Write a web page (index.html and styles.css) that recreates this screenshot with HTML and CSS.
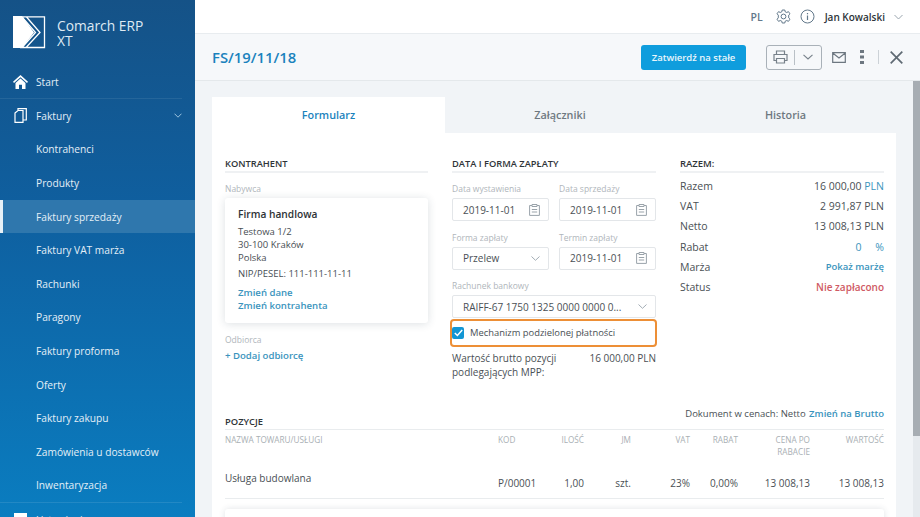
FILE: index.html
```html
<!DOCTYPE html>
<html lang="pl">
<head>
  <meta charset="UTF-8" />
  <title>Comarch ERP XT</title>
  <link rel="stylesheet" href="styles.css">
</head>
<body>
<div class="app">
  <aside class="sidebar">
    <div class="brand">
      <svg class="brand-logo" width="33" height="33" viewBox="0 0 33 33">
        <path d="M0 0H9L21 16.500L9 32H0Z" fill="#fff"/>
        <path d="M7 .8H31.500V31.500H7M9 .8L22.500 16.500L9 31.500M13.500 1L27 16.500L13.500 31" fill="none" stroke="#fff" stroke-width="1.300"/>
      </svg>
      <div class="brand-name">Comarch ERP<br>XT</div>
    </div>
    <nav class="nav">
      <a class="nav-item nav-top">
        <svg class="nav-icon" width="15" height="14" viewBox="0 0 15 14"><path d="M7.500 0L15 6.800L14 8L7.500 2.200L1 8L0 6.800ZM2.500 8L7.500 3.600L12.500 8V14H9V9.800H6V14H2.500Z" fill="#fff"/></svg>
        Start
      </a>
      <a class="nav-item nav-top nav-open">
        <svg class="nav-icon" width="13" height="15" viewBox="0 0 13 15"><path d="M4 2.500V.7H12.300V12H9M1 5L4 2.500H9V14.300H1Z" fill="none" stroke="#fff" stroke-width="1.200"/></svg>
        Faktury
        <svg class="nav-chevron" width="8" height="5" viewBox="0 0 8 5"><path d="M.5 .7L4 4.200L7.500 .7" fill="none" stroke="#9cc3de" stroke-width="1"/></svg>
      </a>
      <a class="nav-item nav-sub">Kontrahenci</a>
      <a class="nav-item nav-sub">Produkty</a>
      <a class="nav-item nav-sub nav-active">Faktury sprzedaży</a>
      <a class="nav-item nav-sub">Faktury VAT marża</a>
      <a class="nav-item nav-sub">Rachunki</a>
      <a class="nav-item nav-sub">Paragony</a>
      <a class="nav-item nav-sub">Faktury proforma</a>
      <a class="nav-item nav-sub">Oferty</a>
      <a class="nav-item nav-sub">Faktury zakupu</a>
      <a class="nav-item nav-sub">Zamówienia u dostawców</a>
      <a class="nav-item nav-sub">Inwentaryzacja</a>
      <a class="nav-item nav-top nav-divided">
        <svg class="nav-icon" width="13" height="14" viewBox="0 0 13 14"><rect width="13" height="14" fill="#fff"/></svg>
        Ustawienia
      </a>
    </nav>
  </aside>

  <main class="main">
    <header class="topbar">
      <span class="lang">PL</span>
      <svg width="15" height="15" viewBox="0 0 15 15"><path d="M6.200 1H8.800L9.200 2.800L10.800 3.500L12.400 2.600L14 4.800L12.700 6.100V8.900L14 10.200L12.400 12.400L10.800 11.500L9.200 12.200L8.800 14H6.200L5.800 12.200L4.200 11.500L2.600 12.400L1 10.200L2.300 8.900V6.100L1 4.800L2.600 2.600L4.200 3.500L5.800 2.800Z" fill="none" stroke="#62788a"/><circle cx="7.500" cy="7.500" r="2.400" fill="none" stroke="#62788a"/></svg>
      <svg class="info" width="15" height="15" viewBox="0 0 15 15"><circle cx="7.500" cy="7.500" r="6.500" fill="none" stroke="#62788a"/><path d="M7.500 6.500V11M7.500 4V5.200" stroke="#62788a" stroke-width="1.200"/></svg>
      <span class="user">Jan Kowalski</span>
      <svg width="9" height="6" viewBox="0 0 9 6"><path d="M.5 1L4.500 5L8.500 1" fill="none" stroke="#9aa5ae"/></svg>
    </header>

    <div class="titlebar">
      <h1 class="doc-number">FS/19/11/18</h1>
      <button class="btn-primary">Zatwierdź na stałe</button>
      <div class="split-btn">
        <span class="split-part">
          <svg width="15" height="14" viewBox="0 0 15 14"><path d="M3.500 4V1H11.500V4M3.500 10.500H1V4.500H14V10.500H11.500M3.500 8.500H11.500V13H3.500Z" fill="none" stroke="#77818a" stroke-width="1.200"/></svg>
        </span>
        <span class="split-part">
          <svg width="10" height="6" viewBox="0 0 10 6"><path d="M.5 .8L5 5L9.500 .8" fill="none" stroke="#77818a" stroke-width="1.100"/></svg>
        </span>
      </div>
      <svg class="mail" width="14" height="11" viewBox="0 0 14 11"><path d="M.7 .7H13.300V10.300H.7ZM.7 1L7 6L13.300 1" fill="none" stroke="#6d7780" stroke-width="1.200"/></svg>
      <svg class="dots" width="4" height="14" viewBox="0 0 4 14"><path d="M0 0H4V3H0ZM0 5.500H4V8.500H0ZM0 11H4V14H0Z" fill="#6d7780"/></svg>
      <span class="sep"></span>
      <svg class="close" width="13" height="13" viewBox="0 0 13 13"><path d="M.7 .7L12.300 12.300M12.300 .7L.7 12.300" stroke="#5f6a73" stroke-width="1.700"/></svg>
    </div>

    <div class="scroller">
      <div class="content">
        <div class="tabs">
          <a class="tab tab-active">Formularz</a>
          <a class="tab">Załączniki</a>
          <a class="tab">Historia</a>
        </div>

        <section class="panel">
          <div class="columns">
            <div class="col-client">
              <h2 class="section-title">KONTRAHENT</h2>
              <div class="field-label">Nabywca</div>
              <div class="client-card">
                <div class="client-name">Firma handlowa</div>
                <div class="client-address">Testowa 1/2<br>30-100 Kraków<br>Polska</div>
                <div class="client-nip">NIP/PESEL: 111-111-11-11</div>
                <a class="link">Zmień dane</a>
                <a class="link">Zmień kontrahenta</a>
              </div>
              <div class="field-label receiver-label">Odbiorca</div>
              <a class="link add-link">+ Dodaj odbiorcę</a>
            </div>

            <div class="col-payment">
              <h2 class="section-title">DATA I FORMA ZAPŁATY</h2>
              <div class="form-grid">
                <div>
                  <div class="field-label">Data wystawienia</div>
                  <div class="input">2019-11-01
                    <svg class="cal" width="11" height="12" viewBox="0 0 11 12"><path d="M3 1.500H.6V11.400H10.400V1.500H8M3 .5H8V2.500H3ZM2.800 5.500H8.200M2.800 8H8.200" fill="none" stroke="#9aa3aa"/></svg>
                  </div>
                </div>
                <div>
                  <div class="field-label">Data sprzedaży</div>
                  <div class="input">2019-11-01
                    <svg class="cal" width="11" height="12" viewBox="0 0 11 12"><path d="M3 1.500H.6V11.400H10.400V1.500H8M3 .5H8V2.500H3ZM2.800 5.500H8.200M2.800 8H8.200" fill="none" stroke="#9aa3aa"/></svg>
                  </div>
                </div>
                <div>
                  <div class="field-label">Forma zapłaty</div>
                  <div class="input">Przelew
                    <svg class="caret" width="9" height="5" viewBox="0 0 9 5"><path d="M.5 .5L4.500 4.300L8.500 .5" fill="none" stroke="#a3adb5"/></svg>
                  </div>
                </div>
                <div>
                  <div class="field-label">Termin zapłaty</div>
                  <div class="input">2019-11-01
                    <svg class="cal" width="11" height="12" viewBox="0 0 11 12"><path d="M3 1.500H.6V11.400H10.400V1.500H8M3 .5H8V2.500H3ZM2.800 5.500H8.200M2.800 8H8.200" fill="none" stroke="#9aa3aa"/></svg>
                  </div>
                </div>
                <div class="span-2">
                  <div class="field-label">Rachunek bankowy</div>
                  <div class="input">RAIFF-67 1750 1325 0000 0000 0...
                    <svg class="caret" width="9" height="5" viewBox="0 0 9 5"><path d="M.5 .5L4.500 4.300L8.500 .5" fill="none" stroke="#a3adb5"/></svg>
                  </div>
                </div>
              </div>
              <label class="mpp-check">
                <span class="checkbox"><svg width="9" height="8" viewBox="0 0 9 8"><path d="M.8 4L3.400 6.500L8.200 1" fill="none" stroke="#fff" stroke-width="1.500"/></svg></span>
                Mechanizm podzielonej płatności
              </label>
              <div class="mpp-value">
                <span>Wartość brutto pozycji podlegających MPP:</span>
                <span class="mpp-amount">16 000,00 PLN</span>
              </div>
            </div>

            <div class="col-total">
              <h2 class="section-title total-title">RAZEM:</h2>
              <dl class="totals">
                <dt>Razem</dt><dd>16 000,00 <span class="link-text">PLN</span></dd>
                <dt>VAT</dt><dd>2 991,87 PLN</dd>
                <dt>Netto</dt><dd>13 008,13 PLN</dd>
                <dt>Rabat</dt><dd class="link-text">0 <span class="percent">%</span></dd>
                <dt>Marża</dt><dd class="link-text strong">Pokaż marżę</dd>
                <dt>Status</dt><dd class="status">Nie zapłacono</dd>
              </dl>
            </div>
          </div>

          <div class="items">
            <div class="items-head">
              <h2 class="items-title">POZYCJE</h2>
              <div class="price-mode">Dokument w cenach: Netto <a class="link-inline">Zmień na Brutto</a></div>
            </div>
            <div class="items-grid items-labels">
              <span>NAZWA TOWARU/USŁUGI</span><span>KOD</span><span class="num">ILOŚĆ</span><span class="num">JM</span><span class="num">VAT</span><span class="num">RABAT</span><span class="num price-label">CENA PO RABACIE</span><span class="num">WARTOŚĆ</span>
            </div>
            <div class="items-grid items-row">
              <span class="item-name">Usługa budowlana</span><span>P/00001</span><span class="num">1,00</span><span class="num">szt.</span><span class="num">23%</span><span class="num">0,00%</span><span class="num">13 008,13</span><span class="num">13 008,13</span>
            </div>
            <div class="summary-card"></div>
          </div>
        </section>
      </div>
      <div class="scrollbar"><div class="scroll-thumb"></div></div>
    </div>
  </main>
</div>
</body>
</html>
```
FILE: styles.css
```css
* {
  box-sizing: border-box;
}
html, body {
  margin: 0;
  height: 517px;
  overflow: hidden;
}
body {
  font-family: "Open Sans", "Liberation Sans", sans-serif;
  font-size: 11px;
  color: #3c4247;
}
.app {
  display: flex;
  width: 920px;
  height: 517px;
  overflow: hidden;
}

/* sidebar */
.sidebar {
  width: 195px;
  flex: none;
  color: #fff;
  background: linear-gradient(180deg, #155287 0%, #0f5f9f 40%, #0a7dc0 100%);
}
.brand {
  display: flex;
  align-items: center;
  height: 65.500px;
  padding: 0 0 0 13px;
}
.brand-logo {
  flex: none;
  margin-right: 11px;
}
.brand-name {
  font-size: 13.800px;
  line-height: 15px;
  color: #dfeaf3;
}
.nav {
  display: flex;
  flex-direction: column;
}
.nav-item {
  display: flex;
  align-items: center;
  height: 33.600px;
  font-size: 10.200px;
  color: #e4eff7;
  flex: none;
}
.nav-top {
  padding-left: 13px;
  margin: 0 13px 0 0;
  position: relative;
}
.nav-top:first-child {
  border-bottom: 1px solid rgba(255, 255, 255, .08);
}
.nav-divided {
  border-top: 1px solid rgba(255, 255, 255, .1);
}
.nav-icon {
  flex: none;
  margin-right: 8px;
  width: 15px;
}
.nav-chevron {
  margin-left: auto;
}
.nav-sub {
  padding-left: 36px;
}
.nav-active {
  background: #2f77ad;
  border-left: 3px solid #e8f1f7;
  padding-left: 33px;
}

/* top */
.main {
  flex: 1;
  min-width: 0;
  display: flex;
  flex-direction: column;
  background: #f1f4f7;
}
.topbar {
  height: 34px;
  flex: none;
  display: flex;
  align-items: center;
  justify-content: flex-end;
  padding-right: 17px;
  background: #fff;
  border-bottom: 1px solid #e8ecef;
}
.lang {
  font-size: 10.500px;
  font-weight: 600;
  color: #62788a;
  margin-right: 13px;
}
.info {
  margin-left: 9px;
}
.user {
  font-size: 10px;
  font-weight: 600;
  color: #2d3439;
  margin: 0 9px 0 10px;
}
.titlebar {
  height: 47px;
  flex: none;
  display: flex;
  align-items: center;
  padding: 0 17px;
  background: #f6f8fa;
  border-bottom: 1px solid #e4e8eb;
}
.doc-number {
  margin: 0 auto 0 0;
  font-size: 14.800px;
  font-weight: 600;
  color: #1a82bd;
}
.btn-primary {
  width: 105px;
  height: 25px;
  border: 0;
  border-radius: 3px;
  background: #0f9ddd;
  color: #e9f6fc;
  font: 600 9.500px "Open Sans", sans-serif;
}
.split-btn {
  display: flex;
  align-items: center;
  width: 56px;
  height: 25px;
  margin-left: 20px;
  border: 1px solid #a9b1b8;
  border-radius: 3px;
}
.split-part {
  flex: 1;
  display: flex;
  align-items: center;
  justify-content: center;
  height: 15px;
}
.split-part:first-child {
  border-right: 1px solid #b9c0c6;
}
.mail {
  margin-left: 10px;
}
.dots {
  margin-left: 14px;
}
.sep {
  width: 1px;
  height: 14px;
  margin-left: 14px;
  background: #ccd2d7;
}
.close {
  margin-left: 11px;
}

/* content */
.scroller {
  flex: 1;
  min-height: 0;
  display: flex;
}
.content {
  flex: 1;
  min-width: 0;
  padding: 16px 17px 0 17px;
}
.scrollbar {
  width: 7px;
  flex: none;
  background: #e6eaee;
}
.scroll-thumb {
  height: 355px;
  background: #a7adb3;
}
.tabs {
  display: grid;
  grid-template-columns: 233px 230px 1fr;
  height: 36px;
}
.tab {
  display: flex;
  align-items: center;
  justify-content: center;
  padding-bottom: 2px;
  font-size: 10.800px;
  font-weight: 600;
  color: #6e7880;
}
.tab-active {
  background: #fff;
  color: #1a82bd;
}
.panel {
  background: #fff;
  padding: 24px 12px 0 13px;
}
.columns {
  display: flex;
  height: 254px;
}
.col-client {
  width: 203px;
  margin-right: 24px;
}
.col-payment {
  width: 204px;
  margin-right: 24px;
}
.col-total {
  flex: 1;
}
.section-title {
  margin: 0;
  height: 16px;
  font-size: 9.300px;
  line-height: 14px;
  font-weight: 600;
  color: #2f3438;
  border-bottom: 2px solid #eff1f3;
}
.field-label {
  font-size: 8.500px;
  line-height: 12px;
  color: #b0b6bb;
  margin: 0 0 3px;
}
.col-client > .field-label:nth-of-type(1) {
  margin-top: 10px;
}
.client-card {
  height: 125px;
  padding: 9px 13px;
  border-radius: 3px;
  background: #fff;
  box-shadow: 0 1px 8px rgba(40, 60, 80, .16);
}
.client-name {
  font-size: 10.200px;
  font-weight: 600;
  color: #2d3236;
  margin-bottom: 4px;
}
.client-address {
  font-size: 9.500px;
  line-height: 13px;
  color: #484e53;
}
.client-nip {
  font-size: 9.500px;
  line-height: 13px;
  margin: 3px 0 6px;
  color: #484e53;
}
.link {
  display: block;
  font-size: 9.600px;
  line-height: 13px;
  font-weight: 600;
  color: #3a94bd;
}
.receiver-label {
  margin-top: 11px;
  margin-bottom: 2px;
}
.add-link {
  line-height: 15px;
}
.form-grid {
  display: grid;
  grid-template-columns: 97px 97px;
  column-gap: 10px;
  row-gap: 10.500px;
  margin-top: 10px;
}
.span-2 {
  grid-column: 1 / 3;
}
.input {
  display: flex;
  align-items: center;
  justify-content: space-between;
  height: 23px;
  padding: 0 8px 0 10px;
  border: 1px solid #e3e6e9;
  border-radius: 2px;
  font-size: 10px;
  color: #4a5055;
}
.mpp-check {
  display: flex;
  align-items: center;
  height: 27.500px;
  margin: 1px -1px 0 -2px;
  border: 2px solid #ed8f36;
  border-radius: 4px;
  font-size: 9.400px;
  color: #4a5055;
}
.checkbox {
  display: flex;
  align-items: center;
  justify-content: center;
  width: 12px;
  height: 12px;
  margin-right: 6px;
  border-radius: 2px;
  background: #1296d4;
}
.mpp-value {
  display: flex;
  justify-content: space-between;
  margin-top: 4.500px;
  font-size: 10px;
  line-height: 14px;
  color: #4a5055;
}
.mpp-value span:first-child {
  width: 118px;
}
.mpp-amount {
  white-space: nowrap;
}
.total-title {
  font-size: 9.500px;
}
.totals {
  display: grid;
  grid-template-columns: auto 1fr;
  grid-auto-rows: 20.200px;
  margin: 3px 0 0;
  align-items: center;
  font-size: 10.500px;
  color: #4a5055;
}
.totals dd {
  margin: 0;
  text-align: right;
}
.link-text {
  color: #3a94bd;
}
.strong {
  font-weight: 600;
  font-size: 9.500px;
}
.percent {
  margin-left: 11px;
}
.status {
  color: #cf5a64;
  font-weight: 600;
  font-size: 10px;
}

/* items */
.items {
  margin-top: -2px;
}
.items-head {
  display: flex;
  justify-content: space-between;
  height: 21px;
  border-bottom: 1px solid #e9ecee;
}
.items-title {
  margin: 6px 0 0;
  font-size: 9.400px;
  line-height: 14px;
  font-weight: 600;
  color: #2f3438;
}
.price-mode {
  font-size: 9.500px;
  line-height: 13px;
  color: #4a5055;
  margin-top: -2px;
}
.link-inline {
  color: #3a94bd;
  font-weight: 600;
  margin-left: 1px;
}
.items-grid {
  display: grid;
  grid-template-columns: 273px 45px 41px 47px 59px 48px 72px 1fr;
}
.num {
  text-align: right;
}
.items-labels {
  padding-top: 4px;
  font-size: 8.200px;
  line-height: 11.500px;
  color: #a9afb4;
  height: 34px;
}
.price-label {
  padding-left: 28px;
}
.items-row {
  height: 35px;
  align-items: center;
  font-size: 10px;
  color: #4a5055;
  border-bottom: 1px solid #e9ecee;
  padding-top: 4px;
}
.item-name {
  margin-top: -10px;
}
.summary-card {
  height: 40px;
  margin-top: 10px;
  border-radius: 3px;
  box-shadow: 0 0 6px rgba(40, 60, 80, .14);
}
```
